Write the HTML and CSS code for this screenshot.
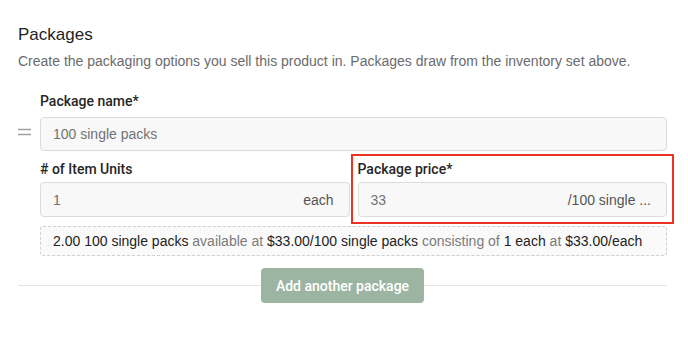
FILE: index.html
```html
<!DOCTYPE html>
<html lang="en">

<head>
    <meta charset="UTF-8">
    <meta name="viewport" content="width=device-width, initial-scale=1.0">
    <title>Packages</title>
    <link rel="stylesheet" href="styles.css">
</head>

<body>
    <section class="packages">
        <h2>Packages</h2>
        <p class="intro">Create the packaging options you sell this product in. Packages draw from the inventory set above.</p>

        <div class="package">
            <div class="name-row">
                <span class="handle">
                    <svg width="13" height="8" viewBox="0 0 13 8">
                        <path d="M0 1.5h13M0 6.5h13" stroke="#a0a0a0" stroke-width="1.4" fill="none" />
                    </svg>
                </span>
                <div class="field">
                    <label>Package name*</label>
                    <div class="input"><span class="value">100 single packs</span></div>
                </div>
            </div>

            <div class="details">
                <div class="pair">
                    <div class="field">
                        <label># of Item Units</label>
                        <div class="input"><span class="value">1</span><span class="unit">each</span></div>
                    </div>
                    <div class="field marked">
                        <label>Package price*</label>
                        <div class="input"><span class="value">33</span><span class="unit">/100 single ...</span></div>
                    </div>
                </div>

                <div class="summary">
                    <b>2.00 100 single packs</b> available at <b>$33.00/100 single packs</b> consisting of <b>1 each</b> at <b>$33.00/each</b>
                </div>
            </div>
        </div>

        <div class="add-row">
            <button class="add">Add another package</button>
        </div>
    </section>
</body>

</html>
```

FILE: styles.css
```css
body {
    margin: 0;
    background: #fff;
    font-family: "Liberation Sans", Arial, sans-serif;
    color: #222;
}

.packages {
    padding: 25px 21px 0 18px;
}

h2 {
    margin: 0;
    font-size: 17px;
    line-height: 20px;
    font-weight: normal;
    color: #1f1f1f;
}

.intro {
    margin: 7px 0 0;
    font-size: 14px;
    line-height: 18px;
    color: #6b6b6b;
}

.package {
    margin-top: 23px;
}

.name-row {
    display: flex;
    align-items: flex-end;
}

.handle {
    width: 22px;
    flex: none;
    display: flex;
    padding-bottom: 15px;
}

.name-row .field {
    flex: 1;
}

.details {
    margin-left: 22px;
}

.pair {
    display: grid;
    grid-template-columns: 1fr 1fr;
    gap: 8px;
    margin-top: 10px;
}

.field label {
    display: block;
    font-family: Roboto, "Liberation Sans", sans-serif;
    font-size: 14px;
    line-height: 16px;
    font-weight: 500;
    color: #262626;
    margin-bottom: 8px;
}

.pair .field label {
    margin-bottom: 5px;
}

.input {
    display: flex;
    justify-content: space-between;
    align-items: center;
    height: 34px;
    padding: 0 15px 0 12px;
    box-sizing: border-box;
    background: #f8f8f8;
    border: 1px solid #dcdcdc;
    border-radius: 4px;
    font-size: 14px;
    color: #727272;
}

.pair .input {
    height: 35px;
}

.unit {
    color: #555;
}

.marked {
    outline: 2.5px solid #ea3323;
    outline-offset: 5px;
}

.summary {
    margin-top: 9px;
    padding: 6px 12px;
    background: #fafafa;
    border: 1px dashed #cfcfcf;
    border-radius: 3px;
    font-size: 14px;
    line-height: 16px;
    color: #7a7a7a;
}

.summary b {
    font-weight: normal;
    color: #222;
}

.add-row {
    display: flex;
    align-items: center;
    margin-top: 12px;
}

.add-row::before,
.add-row::after {
    content: "";
    flex: 1;
    border-top: 1px solid #e4e4e4;
}

.add {
    height: 35px;
    padding: 0 15px;
    border: none;
    border-radius: 4px;
    background: #9cb5a3;
    color: #fff;
    font-family: Roboto, "Liberation Sans", sans-serif;
    font-size: 14px;
    font-weight: 500;
}
```
